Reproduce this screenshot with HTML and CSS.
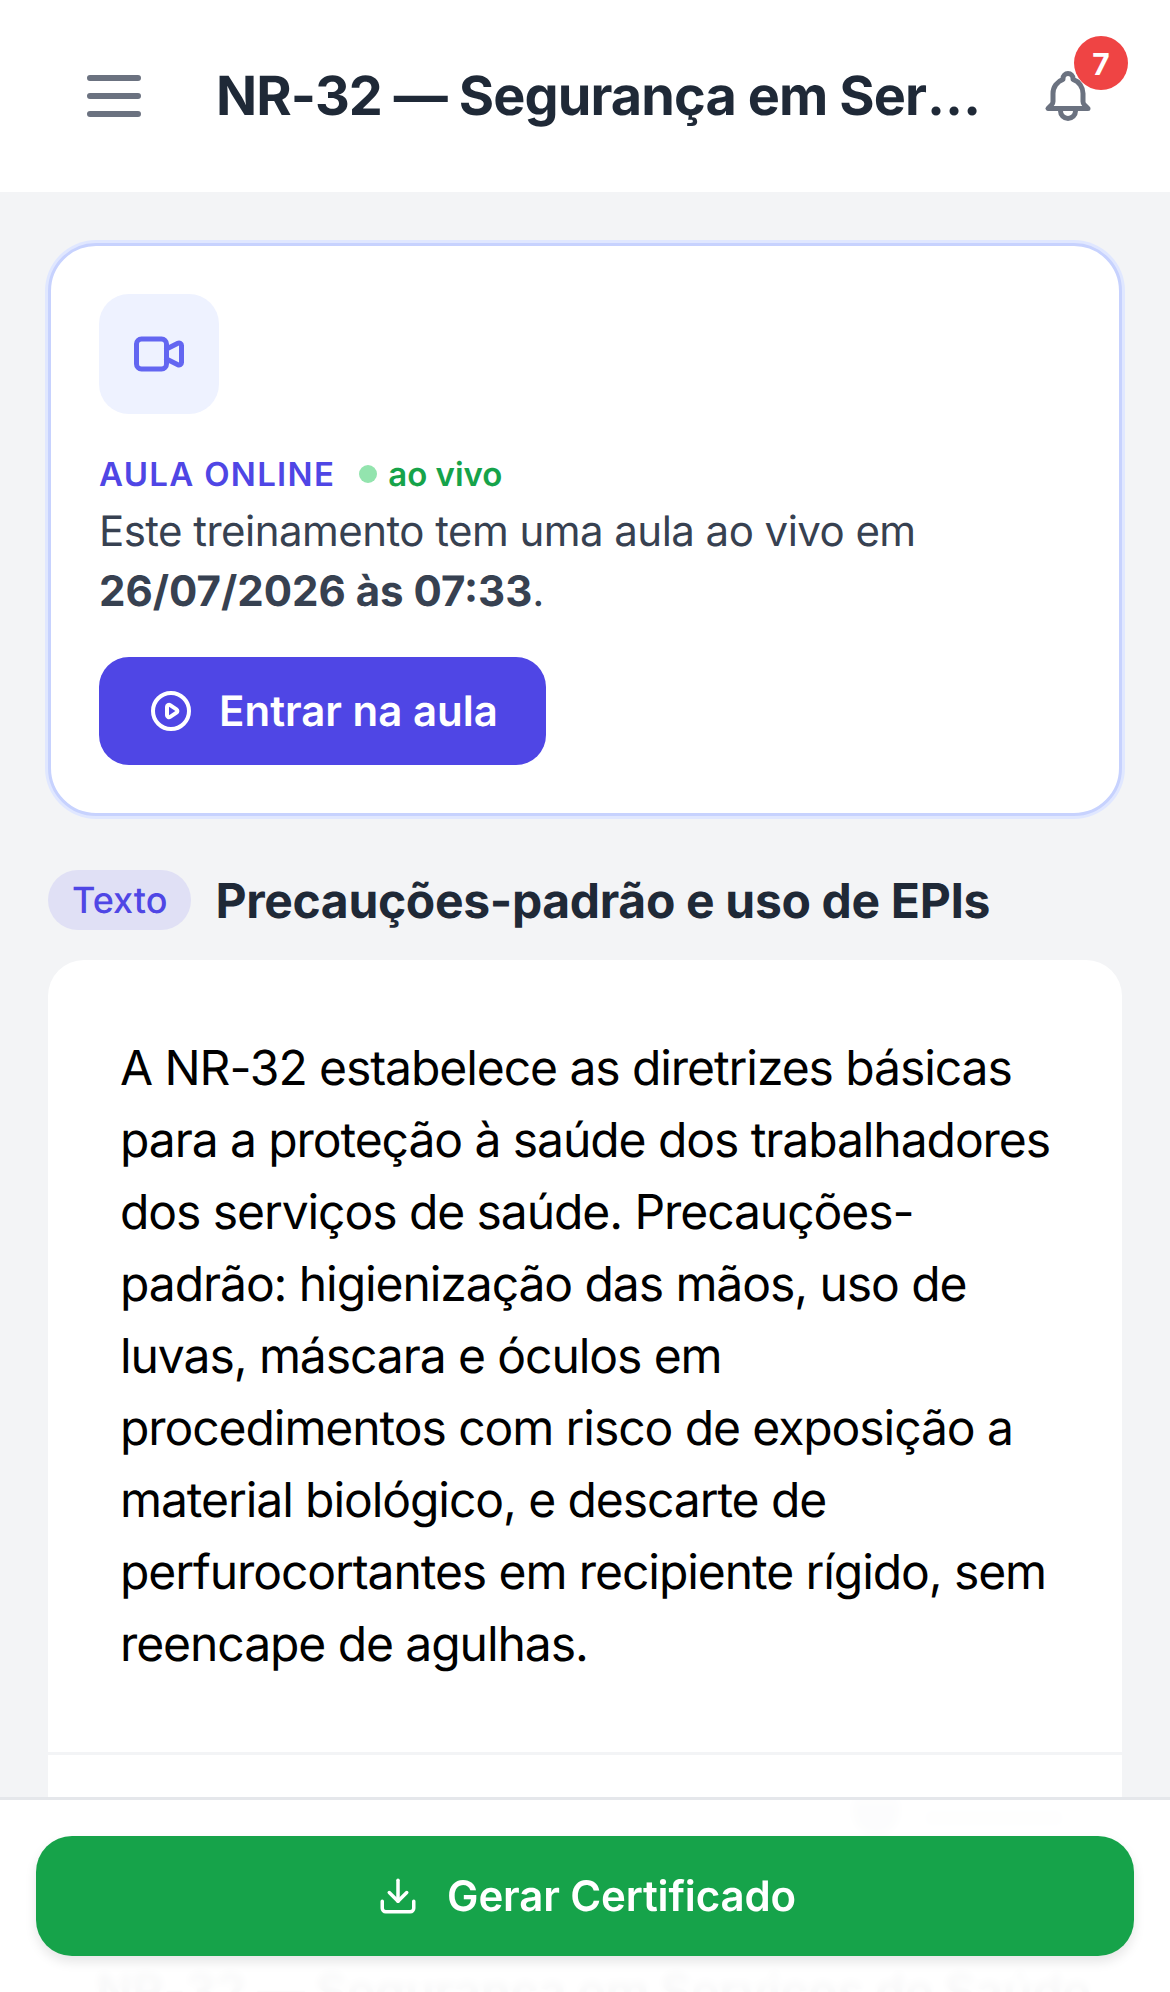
FILE: index.html
```html
<!DOCTYPE html>
<html lang="pt-BR">

<head>
    <meta charset="UTF-8">
    <meta name="viewport" content="width=device-width, initial-scale=1.0">
    <title>NR-32 — Segurança em Serviços de Saúde</title>
    <link rel="stylesheet" href="styles.css">
</head>

<body>

    <header class="topbar">
        <button class="menu-btn" aria-label="Menu">
            <svg width="72" height="72" viewBox="0 0 24 24" fill="none" stroke="#6b7280" stroke-width="2" stroke-linecap="round" stroke-linejoin="round">
                <path d="M4 6h16M4 12h16M4 18h16" />
            </svg>
        </button>
        <h1 class="topbar-title">NR-32 — Segurança em Serviços de Saúde</h1>
        <button class="bell-btn" aria-label="Notificações">
            <svg width="60" height="60" viewBox="0 0 24 24" fill="none" stroke="#6b7280" stroke-width="2" stroke-linecap="round" stroke-linejoin="round">
                <path d="M15 17h5l-1.405-1.405A2.032 2.032 0 0118 14.158V11a6.002 6.002 0 00-4-5.659V5a2 2 0 10-4 0v.341C7.67 6.165 6 8.388 6 11v3.159c0 .538-.214 1.055-.595 1.436L4 17h5m6 0v1a3 3 0 11-6 0v-1m6 0H9" />
            </svg>
            <span class="badge">7</span>
        </button>
    </header>

    <main class="content">
        <section class="live-card">
            <div class="live-icon">
                <svg width="60" height="60" viewBox="0 0 24 24" fill="none" stroke="#6366f1" stroke-width="2" stroke-linecap="round" stroke-linejoin="round">
                    <path d="M15 10l4.553-2.276A1 1 0 0121 8.618v6.764a1 1 0 01-1.447.894L15 14M5 18h8a2 2 0 002-2V8a2 2 0 00-2-2H5a2 2 0 00-2 2v8a2 2 0 002 2z" />
                </svg>
            </div>
            <div class="live-label">
                <span class="live-tag">AULA ONLINE</span>
                <span class="live-dot"></span>
                <span class="live-status">ao vivo</span>
            </div>
            <p class="live-text">Este treinamento tem uma aula ao vivo em <strong>26/07/2026 às 07:33</strong>.</p>
            <a class="join-btn" href="#">
                <svg width="48" height="48" viewBox="0 0 24 24" fill="none" stroke="#fff" stroke-width="2" stroke-linecap="round" stroke-linejoin="round">
                    <path d="M14.752 11.168l-3.197-2.132A1 1 0 0010 9.87v4.263a1 1 0 001.555.832l3.197-2.132a1 1 0 000-1.664z" />
                    <path d="M21 12a9 9 0 11-18 0 9 9 0 0118 0z" />
                </svg>
                Entrar na aula
            </a>
        </section>

        <div class="lesson-head">
            <span class="lesson-type">Texto</span>
            <h2 class="lesson-title">Precauções-padrão e uso de EPIs</h2>
        </div>

        <section class="lesson-card">
            <p class="lesson-body">A NR-32 estabelece as diretrizes básicas para a proteção à saúde dos trabalhadores dos serviços de saúde. Precauções-padrão: higienização das mãos, uso de luvas, máscara e óculos em procedimentos com risco de exposição a material biológico, e descarte de perfurocortantes em recipiente rígido, sem reencape de agulhas.</p>
            <div class="lesson-extra">
                <div class="extra-mark" aria-hidden="true">
                    <span class="extra-mark-dot"></span>
                    <span class="extra-mark-bar"></span>
                </div>
                <h3 class="extra-title">NR-32 — Segurança em Serviços de Saúde</h3>
            </div>
        </section>
    </main>

    <footer class="cert-bar">
        <a class="cert-btn" href="#">
            <svg width="42" height="42" viewBox="0 0 24 24" fill="none" stroke="#fff" stroke-width="2" stroke-linecap="round" stroke-linejoin="round">
                <path d="M12 15V3" />
                <path d="M21 15v4a2 2 0 0 1-2 2H5a2 2 0 0 1-2-2v-4" />
                <path d="m7 10 5 5 5-5" />
            </svg>
            Gerar Certificado
        </a>
    </footer>

</body>

</html>
```

FILE: styles.css
```css
* {
    box-sizing: border-box;
}

html,
body {
    height: 1992px;
    overflow: hidden;
}

body {
    font-family: Inter, "Noto Sans", sans-serif;
    background-color: #f3f4f6;
    margin: 0;
    padding: 0;
    color: #1f2937;
    text-rendering: geometricPrecision;
}

button {
    background: none;
    border: none;
    padding: 0;
    font-family: inherit;
}

.topbar {
    height: 192px;
    background-color: #fff;
    display: flex;
    align-items: center;
    padding: 0 72px 0 78px;
}

.menu-btn,
.bell-btn {
    display: flex;
    flex-shrink: 0;
}

.bell-btn {
    position: relative;
    margin-left: 54px;
}

.badge {
    position: absolute;
    top: -30px;
    right: -30px;
    width: 54px;
    height: 54px;
    padding-top: 2px;
    border-radius: 50%;
    background-color: #ef4444;
    color: #fff;
    font-size: 30px;
    font-weight: 700;
    display: flex;
    align-items: center;
    justify-content: center;
}

.topbar-title {
    flex: 1;
    min-width: 0;
    margin: 0 0 0 66px;
    font-size: 54px;
    font-weight: 700;
    letter-spacing: -0.9px;
    white-space: nowrap;
    overflow: hidden;
    text-overflow: ellipsis;
}

.content {
    padding: 51px 48px;
}

.live-card {
    background-color: #fff;
    border: 3px solid #c7d2fe;
    border-radius: 48px;
    padding: 48px;
    box-shadow: 0 0 0 3px #e0e7ff;
}

.live-icon {
    width: 120px;
    height: 120px;
    border-radius: 30px;
    background-color: #eef2ff;
    display: flex;
    align-items: center;
    justify-content: center;
    margin-bottom: 36px;
}

.live-label {
    display: flex;
    align-items: center;
    height: 48px;
    margin-bottom: 4px;
}

.live-tag {
    font-size: 33px;
    font-weight: 600;
    letter-spacing: 1.3px;
    color: #4f46e5;
}

.live-dot {
    width: 18px;
    height: 18px;
    border-radius: 50%;
    background-color: #93e4ae;
    margin: 0 11px 0 24px;
}

.live-status {
    font-size: 33px;
    font-weight: 600;
    color: #16a34a;
}

.live-text {
    margin: 0 0 35px;
    font-size: 42px;
    line-height: 60px;
    letter-spacing: -0.54px;
    color: #374151;
}

.live-text strong {
    font-weight: 700;
    letter-spacing: 0;
}

.join-btn {
    display: inline-flex;
    align-items: center;
    gap: 24px;
    height: 108px;
    padding: 0 48px;
    border-radius: 30px;
    background-color: #4f46e5;
    color: #fff;
    font-size: 42px;
    font-weight: 600;
    text-decoration: none;
}

.lesson-head {
    display: flex;
    align-items: center;
    gap: 24px;
    margin: 54px 0 30px;
}

.lesson-type {
    height: 60px;
    padding: 0 24px;
    border-radius: 30px;
    background-color: #e0e0f5;
    color: #4f46e5;
    font-size: 36px;
    font-weight: 500;
    line-height: 60px;
}

.lesson-title {
    margin: 0;
    font-size: 48px;
    font-weight: 700;
    letter-spacing: -0.33px;
}

.lesson-card {
    background-color: #fff;
    border-radius: 36px 36px 0 0;
}

.lesson-body {
    margin: 0;
    padding: 72px 66px 72px 72px;
    font-size: 48px;
    line-height: 72px;
    letter-spacing: -1.07px;
    color: #000;
}

.lesson-extra {
    border-top: 3px solid #f3f4f6;
    padding: 45px 48px 0;
}

.extra-mark {
    display: flex;
    justify-content: flex-end;
    align-items: center;
    gap: 24px;
    height: 36px;
    margin: 0 0 125px;
    padding-right: 10px;
}

.extra-mark-dot {
    width: 48px;
    height: 36px;
    border-radius: 0 0 24px 24px;
    background-color: #9ca3af;
}

.extra-mark-bar {
    width: 140px;
    height: 18px;
    background-color: #d1d5db;
}

.extra-title {
    margin: 0;
    font-size: 48px;
    font-weight: 700;
    letter-spacing: -0.33px;
    white-space: nowrap;
}

.cert-bar {
    position: fixed;
    left: 0;
    right: 0;
    bottom: 0;
    height: 195px;
    padding: 36px 36px 36px;
    background-color: rgba(255, 255, 255, 0.97);
    backdrop-filter: blur(4px);
    border-top: 3px solid #e5e7eb;
}

.cert-btn {
    display: flex;
    align-items: center;
    justify-content: center;
    gap: 28px;
    height: 120px;
    padding-left: 3px;
    border-radius: 36px;
    background-color: #16a34a;
    color: #fff;
    font-size: 42px;
    font-weight: 600;
    letter-spacing: -0.15px;
    text-decoration: none;
    box-shadow: 0 6px 12px rgba(0, 0, 0, 0.1);
}
```
